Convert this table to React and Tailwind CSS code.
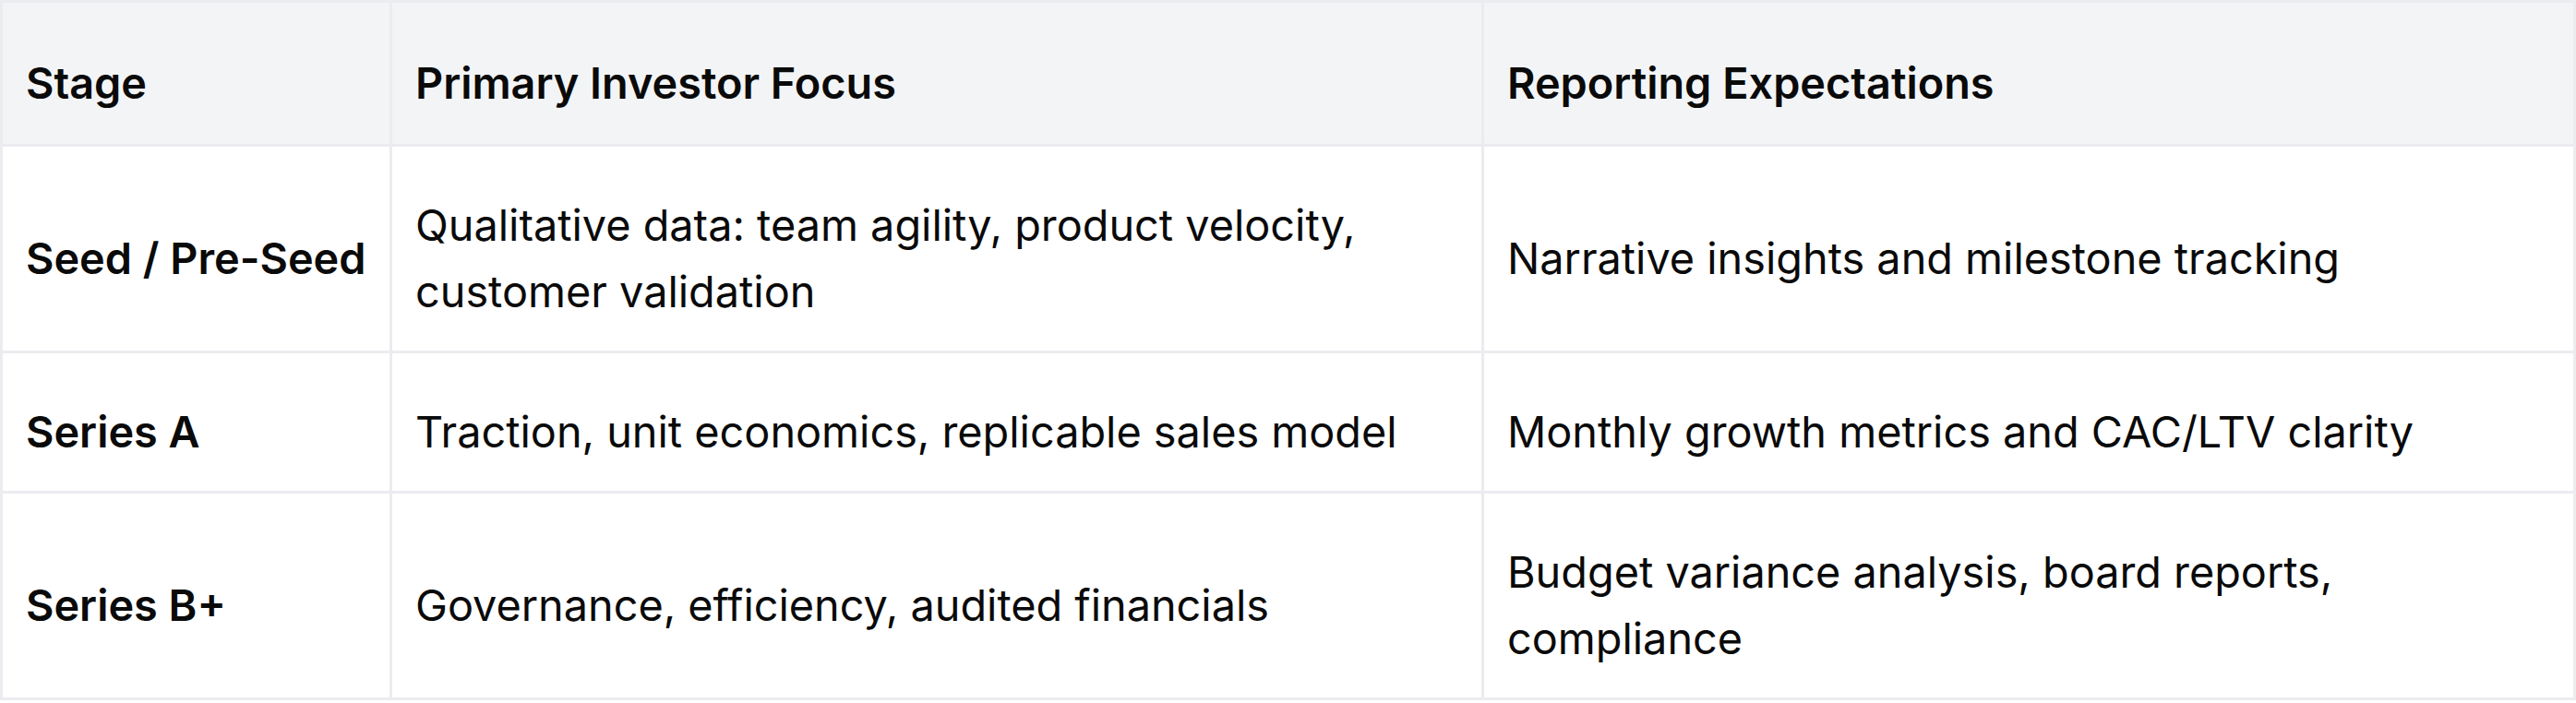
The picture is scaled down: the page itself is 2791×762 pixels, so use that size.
const rows = [
  {
    stage: "Seed / Pre-Seed",
    focus: "Qualitative data: team agility, product velocity, customer validation",
    reporting: "Narrative insights and milestone tracking",
  },
  {
    stage: "Series A",
    focus: "Traction, unit economics, replicable sales model",
    reporting: "Monthly growth metrics and CAC/LTV clarity",
  },
  {
    stage: "Series B+",
    focus: "Governance, efficiency, audited financials",
    reporting: "Budget variance analysis, board reports, compliance",
  },
];

const App = () => {
  return (
    <div className="w-[2791px] bg-white" style={{ fontFamily: "Inter, 'Noto Sans', sans-serif" }}>
      <table className="w-full table-fixed border-collapse border-[3px] border-[#ececf0] text-[46.8px] leading-[72px] text-[#0a0a0a]">
        <colgroup>
          <col className="w-[422px]" />
          <col />
          <col />
        </colgroup>
        <thead>
          <tr className="bg-[#f3f4f6]">
            {["Stage", "Primary Investor Focus", "Reporting Expectations"].map((h) => (
              <th
                key={h}
                className="border-[3px] border-[#ececf0] px-[25px] pt-[51px] pb-[30px] text-left font-semibold whitespace-nowrap"
              >
                {h}
              </th>
            ))}
          </tr>
        </thead>
        <tbody>
          {rows.map((r) => (
            <tr key={r.stage}>
              <td className="border-[3px] border-[#ececf0] px-[25px] pt-[49px] pb-[28px] font-semibold whitespace-nowrap">
                {r.stage}
              </td>
              <td className="border-[3px] border-[#ececf0] px-[25px] pt-[49px] pb-[28px]">{r.focus}</td>
              <td className="border-[3px] border-[#ececf0] px-[25px] pt-[49px] pb-[28px]">{r.reporting}</td>
            </tr>
          ))}
        </tbody>
      </table>
    </div>
  );
};

export default App;
